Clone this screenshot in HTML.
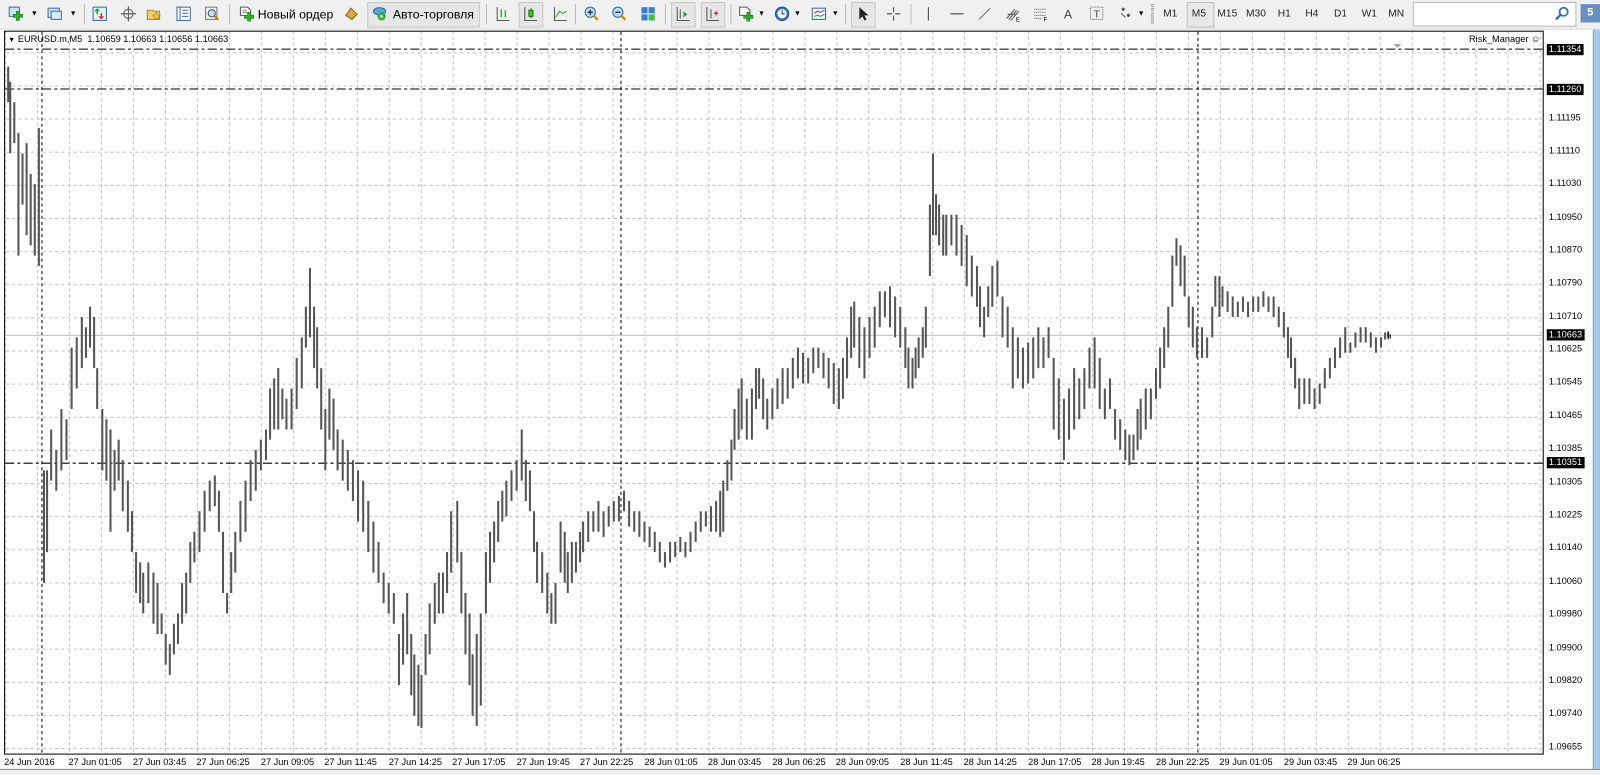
<!DOCTYPE html>
<html><head><meta charset="utf-8"><style>
html,body{margin:0;padding:0;width:1600px;height:774px;overflow:hidden;background:#f0f0f0;font-family:"Liberation Sans",sans-serif}
#w{position:absolute;left:0;top:0;width:1564px;height:757px;transform:scale(1.0230,1.0225);transform-origin:0 0}
.tb{position:absolute;left:0;top:0;width:1564px;height:28px;background:#f0f0f0;border-bottom:1px solid #d8d8d8}
.t{position:absolute;font-size:11px;color:#000;top:8px}
.sep{position:absolute;top:4px;width:1px;height:20px;background:#bbb}
.ic{position:absolute;top:6px;width:15px;height:15px}
.tf{position:absolute;top:8px;font-size:10px;color:#222}
.pl{position:absolute;left:1512px;font-size:9px;color:#000;height:11px;line-height:11px;padding:0 2px}
.bl{position:absolute;top:740px;font-size:9px;color:#000}
</style></head><body><div id="w">
<div class="tb">
 <svg class="ic" style="left:8px" viewBox="0 0 15 15"><rect x="1" y="1" width="10" height="9" fill="#cfe3f7" stroke="#3a6ea5"/><path d="M8 5h3v3h3v3h-3v3h-3v-3h-3v-3h3z" fill="#2fae2f" stroke="#1c7a1c" stroke-width=".6"/></svg>
 <div class="t" style="left:30px;font-size:7px;top:10px">▼</div>
 <svg class="ic" style="left:46px" viewBox="0 0 15 15"><rect x="1" y="2" width="11" height="9" fill="#cfe3f7" stroke="#3a6ea5"/><rect x="4" y="5" width="10" height="8" fill="#dce9f7" stroke="#3a6ea5"/></svg>
 <div class="t" style="left:68px;font-size:7px;top:10px">▼</div>
 <div class="sep" style="left:82px"></div>
 <svg class="ic" style="left:90px" viewBox="0 0 15 15"><rect x="1" y="1" width="13" height="13" fill="#e8f1fb" stroke="#3a6ea5"/><path d="M5 3v5M3 5l2-2 2 2" stroke="#2a2" fill="none" stroke-width="1.5"/><path d="M9 7v5M7 10l2 2 2-2" stroke="#d33" fill="none" stroke-width="1.5"/></svg>
 <svg class="ic" style="left:118px" viewBox="0 0 15 15"><circle cx="7.5" cy="7.5" r="4.5" fill="none" stroke="#555"/><path d="M7.5 0v15M0 7.5h15" stroke="#555"/></svg>
 <svg class="ic" style="left:143px" viewBox="0 0 15 15"><path d="M1 4h5l1 1h6v8H1z" fill="#f2cf6a" stroke="#b08a2a"/><path d="M10 6l1.2 2.5 2.6.3-2 1.8.6 2.6-2.4-1.4-2.4 1.4.6-2.6-2-1.8 2.6-.3z" fill="#f5c430" stroke="#a07a10" stroke-width=".5"/></svg>
 <svg class="ic" style="left:172px" viewBox="0 0 15 15"><rect x="1" y="1" width="13" height="13" fill="#fff" stroke="#3a6ea5"/><path d="M4 1v13M6 4h6M6 7h6M6 10h6" stroke="#3a6ea5"/></svg>
 <svg class="ic" style="left:200px" viewBox="0 0 15 15"><rect x="1" y="1" width="11" height="12" fill="#eef" stroke="#777"/><circle cx="7" cy="7" r="3.5" fill="#cde" stroke="#456"/><path d="M9.5 9.5l4 4" stroke="#b80" stroke-width="2"/></svg>
 <div class="sep" style="left:224px"></div>
 <svg class="ic" style="left:234px" viewBox="0 0 15 15"><path d="M1 1h7l3 3v5H1z" fill="#fff" stroke="#555"/><path d="M3 4h4M3 6h5" stroke="#777"/><path d="M8 6h3v3h3v3h-3v3h-3v-3h-3v-3h3z" fill="#2fae2f" stroke="#1c7a1c" stroke-width=".6"/></svg>
 <div class="t" style="left:252px;top:7px;font-size:12px">Новый ордер</div>
 <svg class="ic" style="left:336px" viewBox="0 0 15 15"><path d="M2 9l5-7 6 6-5 5z" fill="#d9a93a" stroke="#8a6318"/></svg>
 <div style="position:absolute;left:359px;top:2px;width:108px;height:23px;background:#e6e6e6;border:1px solid #c8c8c8"></div>
 <svg class="ic" style="left:364px" viewBox="0 0 15 15"><ellipse cx="7" cy="5" rx="6" ry="3.5" fill="#5aa2d8" stroke="#2c6c9e"/><circle cx="9" cy="10" r="4" fill="#2fae2f"/><path d="M8 8v4l3-2z" fill="#fff"/></svg>
 <div class="t" style="left:384px;top:7px;font-size:12px">Авто-торговля</div>
 <div class="sep" style="left:475px"></div>
 <svg class="ic" style="left:484px" viewBox="0 0 15 15"><path d="M2 1v13h12" stroke="#555" fill="none"/><path d="M6 3v8M10 4v7" stroke="#2a2" stroke-width="1.4"/></svg>
 <div style="position:absolute;left:507px;top:2px;width:22px;height:23px;background:#e6e6e6;border:1px solid #c8c8c8"></div>
 <svg class="ic" style="left:511px" viewBox="0 0 15 15"><path d="M2 1v13h12" stroke="#555" fill="none"/><rect x="6" y="4" width="4" height="6" fill="#3c3" stroke="#171"/><path d="M8 2v2M8 10v2" stroke="#171"/></svg>
 <svg class="ic" style="left:540px" viewBox="0 0 15 15"><path d="M2 1v13h12" stroke="#555" fill="none"/><path d="M3 11l4-6 3 2 4-2" stroke="#2a2" fill="none"/></svg>
 <div class="sep" style="left:562px"></div>
 <svg class="ic" style="left:571px" viewBox="0 0 15 15"><circle cx="6" cy="6" r="5" fill="#bde" stroke="#369"/><path d="M3.5 6h5M6 3.5v5" stroke="#236" stroke-width="1.5"/><path d="M9.5 9.5l4 4" stroke="#c90" stroke-width="2.4"/></svg>
 <svg class="ic" style="left:598px" viewBox="0 0 15 15"><circle cx="6" cy="6" r="5" fill="#bde" stroke="#369"/><path d="M3.5 6h5" stroke="#236" stroke-width="1.5"/><path d="M9.5 9.5l4 4" stroke="#c90" stroke-width="2.4"/></svg>
 <svg class="ic" style="left:626px" viewBox="0 0 15 15"><rect x="1" y="1" width="6" height="6" fill="#3a7ed0"/><rect x="8" y="1" width="6" height="6" fill="#3a7ed0"/><rect x="1" y="8" width="6" height="6" fill="#3a7ed0"/><rect x="8" y="8" width="6" height="6" fill="#4b4"/></svg>
 <div class="sep" style="left:650px"></div>
 <div style="position:absolute;left:656px;top:2px;width:22px;height:23px;background:#e6e6e6;border:1px solid #c8c8c8"></div>
 <svg class="ic" style="left:660px" viewBox="0 0 15 15"><path d="M2 1v13h12M5 3v9" stroke="#555" fill="none"/><path d="M8 5l4 3-4 3z" fill="#2a2"/></svg>
 <div style="position:absolute;left:685px;top:2px;width:22px;height:23px;background:#e6e6e6;border:1px solid #c8c8c8"></div>
 <svg class="ic" style="left:689px" viewBox="0 0 15 15"><path d="M2 1v13h12M6 3v9" stroke="#555" fill="none"/><path d="M9 7h4M11 5v4" stroke="#c22" stroke-width="1.2"/></svg>
 <div class="sep" style="left:714px"></div>
 <svg class="ic" style="left:722px" viewBox="0 0 15 15"><path d="M1 1h7l3 3v5H1z" fill="#fff" stroke="#555"/><path d="M8 6h3v3h3v3h-3v3h-3v-3h-3v-3h3z" fill="#2fae2f" stroke="#1c7a1c" stroke-width=".6"/></svg>
 <div class="t" style="left:741px;font-size:7px;top:10px">▼</div>
 <svg class="ic" style="left:757px" viewBox="0 0 15 15"><circle cx="7.5" cy="7.5" r="6.5" fill="#2f7fd0" stroke="#164c86"/><circle cx="7.5" cy="7.5" r="4.5" fill="#fff"/><path d="M7.5 4v3.5h2.5" stroke="#333" fill="none"/></svg>
 <div class="t" style="left:776px;font-size:7px;top:10px">▼</div>
 <svg class="ic" style="left:793px" viewBox="0 0 15 15"><rect x="1" y="2" width="13" height="11" fill="#eef4fb" stroke="#3a6ea5"/><path d="M3 7l3-2 3 1 4-2" stroke="#c33" fill="none"/><path d="M3 10l3-1 3 1 4-2" stroke="#2a2" fill="none"/></svg>
 <div class="t" style="left:813px;font-size:7px;top:10px">▼</div>
 <div class="sep" style="left:826px"></div>
 <div style="position:absolute;left:832px;top:2px;width:22px;height:23px;background:#e6e6e6;border:1px solid #c8c8c8"></div>
 <svg class="ic" style="left:836px" viewBox="0 0 15 15"><path d="M4 1v12l3-3 2 4 2-1-2-4h4z" fill="#222"/></svg>
 <svg class="ic" style="left:866px" viewBox="0 0 15 15"><path d="M7.5 1v5M7.5 9v5M1 7.5h5M9 7.5h5" stroke="#444"/></svg>
 <div class="sep" style="left:890px"></div>
 <svg class="ic" style="left:900px" viewBox="0 0 15 15"><path d="M7.5 1v13" stroke="#444"/></svg>
 <svg class="ic" style="left:928px" viewBox="0 0 15 15"><path d="M1 7.5h13" stroke="#444"/></svg>
 <svg class="ic" style="left:955px" viewBox="0 0 15 15"><path d="M2 13L13 2" stroke="#666"/></svg>
 <svg class="ic" style="left:983px" viewBox="0 0 15 15"><path d="M1 12L9 3M3 13L11 4M5 14L13 5M2 8h9" stroke="#555"/><text x="10" y="15" font-size="6" font-family="Liberation Sans">E</text></svg>
 <svg class="ic" style="left:1010px" viewBox="0 0 15 15"><path d="M1 3h12M1 6h12M1 9h12M1 12h8" stroke="#555" stroke-dasharray="1 1"/><text x="10" y="15" font-size="6" font-family="Liberation Sans">F</text></svg>
 <div class="t" style="left:1040px;top:7px;font-size:12px;color:#444">A</div>
 <svg class="ic" style="left:1065px" viewBox="0 0 15 15"><rect x="1" y="1" width="12" height="12" fill="none" stroke="#666" stroke-dasharray="1 1"/><text x="4" y="11" font-size="10" font-family="Liberation Sans" fill="#444">T</text></svg>
 <svg class="ic" style="left:1093px" viewBox="0 0 15 15"><path d="M3 3l2-2 2 2-2 2zM8 9l2-2 2 2-2 2z" fill="#555"/><path d="M3 7l4 4" stroke="#555"/></svg>
 <div class="t" style="left:1112px;font-size:7px;top:10px">▼</div>
 <div class="sep" style="left:1125px;background:repeating-linear-gradient(#999 0 1px,transparent 1px 2px);width:3px"></div>
 <div class="tf" style="left:1137px">M1</div>
 <div style="position:absolute;left:1160px;top:2px;width:25px;height:23px;background:#e8e8e8;border:1px solid #c0c0c0"></div>
 <div class="tf" style="left:1165px">M5</div>
 <div class="tf" style="left:1190px">M15</div>
 <div class="tf" style="left:1218px">M30</div>
 <div class="tf" style="left:1249px">H1</div>
 <div class="tf" style="left:1276px">H4</div>
 <div class="tf" style="left:1304px">D1</div>
 <div class="tf" style="left:1331px">W1</div>
 <div class="tf" style="left:1357px">MN</div>
 <div style="position:absolute;left:1381px;top:2px;width:158px;height:22px;background:#fff;border:1px solid #b8b8b8"></div>
 <svg style="position:absolute;left:1520px;top:6px;width:14px;height:14px" viewBox="0 0 14 14"><circle cx="8.5" cy="5.5" r="4" fill="none" stroke="#2a6cc0" stroke-width="1.6"/><path d="M5.5 8.5L1 13" stroke="#2a6cc0" stroke-width="2.2"/></svg>
 <div style="position:absolute;left:1545px;top:4px;width:19px;height:18px;background:#6a8fbf;color:#fff;font-size:11px;font-weight:bold;text-align:center;line-height:17px">5</div>
</div>

<div style="position:absolute;left:0;top:29px;width:1564px;height:728px;background:#fff"></div>
<svg style="position:absolute;left:0;top:0" width="1564" height="757" viewBox="0 0 1564 757">
<defs>
<pattern id="gv" x="5" y="0" width="31.25" height="757" patternUnits="userSpaceOnUse"><path d="M0.5 0V757" stroke="#c0c0c0" stroke-dasharray="3 3"/></pattern>
<pattern id="gh" x="0" y="18.8" width="1564" height="32.4" patternUnits="userSpaceOnUse"><path d="M0 0.5H1564" stroke="#c0c0c0" stroke-dasharray="3 3"/></pattern>
</defs>
<rect x="5" y="31" width="1502" height="705" fill="url(#gv)"/>
<rect x="5" y="31" width="1502" height="705" fill="url(#gh)"/>
<rect x="4.5" y="30.5" width="1504" height="707" fill="none" stroke="#000"/>
<path d="M41 31V736M607 31V736M1171 31V736" stroke="#000" stroke-dasharray="3 3"/>
<path d="M5 48H1508M5 87H1508M5 453H1508" stroke="#000" stroke-dasharray="9 3 3 3"/>
<path d="M5 328H1508" stroke="#c0c0c0"/>
<path d="M1362 43l4 4 4-4z" fill="#aaa"/>
<g stroke="#555" fill="none">
<path stroke-width="2" d="M8 65V100M10 80V150M14 100V140M18 130V250M22 150V200M26 140V230M30 170V240M34 180V250M38 125V260M43 460V570M46 460V540M50 420V470M55 440V480M60 400V460M65 410V450M70 340V400M75 330V380M80 310V360M84 320V350M88 300V340M92 310V360M95 360V400M100 400V460M104 410V470M108 420V520M112 440V480M116 430V470M120 450V500M125 470V520M129 500V540M133 540V580M137 550V590M140 560V600M145 550V590M150 560V610M154 570V620M158 600V620M162 620V650M166 630V660M170 610V640M174 600V630M178 570V610M182 560V600M186 530V570M190 520V550M195 500V540M200 480V520M205 470V500M210 465V495M214 480V520M218 520V580M222 580V600M226 540V580M230 520V560M235 490V530M240 470V520M245 450V490M250 440V480M255 430V460M260 420V450M264 380V430M268 370V420M272 360V420M276 380V410M280 390V420M285 380V420M290 350V400M295 330V380M299 300V340M303 262V330M307 300V360M310 320V380M314 360V420M318 400V460M322 380V430M326 390V440M330 420V460M335 430V470M340 440V480M345 450V490M350 460V510M355 470V520M360 490V540M365 510V560M370 530V570M375 560V590M380 570V600M385 580V610M390 620V670M394 600V650M398 580V640M402 620V680M405 640V700M409 650V710M412 660V712M416 620V660M420 590V640M425 570V610M429 560V600M433 560V600M437 540V580M441 500V560M447 490V550M451 540V600M455 580V640M459 600V670M462 640V700M466 620V710M470 600V690M475 540V600M479 520V570M483 510V550M487 490V530M491 480V510M495 470V505M500 460V490M505 450V480M510 420V470M514 450V490M518 460V500M522 500V540M525 530V570M530 540V580M535 560V600M539 580V610M543 570V610M548 510V560M552 520V570M555 540V580M559 530V570M563 530V560M567 520V550M570 510V540M575 500V530M580 500V520M585 490V520M590 500V525M595 495V515M600 490V510M605 485V510M610 480V500M615 490V515M620 500V520M625 500V525M630 510V530M635 515V535M640 520V540M645 530V550M650 540V555M655 530V550M660 530V545M665 525V540M670 530V545M675 520V540M680 510V530M685 500V520M690 500V515M695 495V520M700 490V520M704 480V525M707 470V520M711 450V480M715 430V470M718 400V440M722 380V430M725 370V420M730 390V430M735 380V430M739 360V400M742 360V390M746 370V410M750 390V420M755 380V410M760 370V400M765 360V395M770 360V390M775 350V380M780 340V370M785 345V375M790 350V375M795 340V365M800 340V360M805 345V370M810 350V380M815 355V395M820 360V400M824 350V390M828 330V370M832 300V350M835 295V340M840 310V360M845 320V370M850 310V350M855 300V340M860 285V320M865 285V310M870 280V320M875 290V330M880 300V340M885 320V360M888 340V380M892 350V380M895 340V370M898 330V360M902 320V350M905 300V340M909 200V270M912 150V230M915 190V230M918 200V240M922 210V250M925 210V250M930 210V240M935 210V250M940 220V260M945 230V280M950 250V290M955 260V300M958 280V320M962 300V330M966 280V310M970 260V300M975 255V290M980 290V330M985 300V340M990 320V380M995 330V370M1000 340V380M1005 335V375M1010 330V370M1015 320V360M1020 330V360M1025 320V350M1030 350V420M1035 370V430M1040 390V450M1045 380V430M1050 360V420M1055 370V410M1060 360V400M1065 340V380M1070 330V380M1075 350V400M1080 380V410M1085 370V400M1090 400V430M1095 410V440M1100 420V450M1104 425V455M1108 425V450M1112 400V440M1115 390V430M1120 380V420M1125 380V410M1130 360V390M1134 340V380M1138 320V360M1142 300V340M1146 250V300M1150 233V260M1154 240V280M1158 250V290M1162 290V320M1166 300V340M1170 320V350M1175 320V350M1180 330V350M1185 300V330M1188 270V300M1192 270V310M1195 280V300M1200 285V305M1205 290V310M1210 295V310M1215 290V305M1220 295V310M1225 290V305M1230 290V305M1235 285V300M1240 290V305M1245 290V310M1250 300V320M1255 305V330M1259 320V350M1262 330V360M1266 350V380M1270 370V400M1275 370V395M1280 370V395M1285 380V400M1290 375V395M1295 360V380M1300 350V370M1305 340V360M1310 330V350M1315 320V345M1320 335V345M1325 325V340M1330 320V335M1335 320V335M1340 325V340M1345 330V345M1350 330V340M1354 325V332M1357 325V330"/>
</g>
<path d="M1357 324V332M1359 327V331" stroke="#000"/>
</svg>

<div style="position:absolute;left:8px;top:33px;font-size:9px;color:#000;white-space:pre"><span style="font-size:7px">▼</span> EURUSD.m,M5  1.10659 1.10663 1.10656 1.10663</div>
<div style="position:absolute;left:1436px;top:33px;font-size:9px;color:#000">Risk_Manager ☺</div>

<div class="pl" style="top:43px;background:#000;color:#fff">1.11354</div>
<div class="pl" style="top:82px;background:#000;color:#fff">1.11260</div>
<div class="pl" style="top:110px">1.11195</div>
<div class="pl" style="top:142px">1.11110</div>
<div class="pl" style="top:174px">1.11030</div>
<div class="pl" style="top:207px">1.10950</div>
<div class="pl" style="top:239px">1.10870</div>
<div class="pl" style="top:271px">1.10790</div>
<div class="pl" style="top:304px">1.10710</div>
<div class="pl" style="top:322px;background:#000;color:#fff">1.10663</div>
<div class="pl" style="top:336px">1.10625</div>
<div class="pl" style="top:368px">1.10545</div>
<div class="pl" style="top:401px">1.10465</div>
<div class="pl" style="top:433px">1.10385</div>
<div class="pl" style="top:447px;background:#000;color:#fff">1.10351</div>
<div class="pl" style="top:466px">1.10305</div>
<div class="pl" style="top:498px">1.10225</div>
<div class="pl" style="top:530px">1.10140</div>
<div class="pl" style="top:563px">1.10060</div>
<div class="pl" style="top:595px">1.09980</div>
<div class="pl" style="top:628px">1.09900</div>
<div class="pl" style="top:660px">1.09820</div>
<div class="pl" style="top:692px">1.09740</div>
<div class="pl" style="top:725px">1.09655</div>
<div style="position:absolute;left:1557px;top:29px;width:7px;height:728px;background:#a9c8e8;border-left:1px solid #7fa4cc"></div>

<div class="bl" style="left:4px">24 Jun 2016</div>
<div class="bl" style="left:67px">27 Jun 01:05</div>
<div class="bl" style="left:130px">27 Jun 03:45</div>
<div class="bl" style="left:192px">27 Jun 06:25</div>
<div class="bl" style="left:255px">27 Jun 09:05</div>
<div class="bl" style="left:317px">27 Jun 11:45</div>
<div class="bl" style="left:380px">27 Jun 14:25</div>
<div class="bl" style="left:442px">27 Jun 17:05</div>
<div class="bl" style="left:505px">27 Jun 19:45</div>
<div class="bl" style="left:567px">27 Jun 22:25</div>
<div class="bl" style="left:630px">28 Jun 01:05</div>
<div class="bl" style="left:692px">28 Jun 03:45</div>
<div class="bl" style="left:755px">28 Jun 06:25</div>
<div class="bl" style="left:817px">28 Jun 09:05</div>
<div class="bl" style="left:880px">28 Jun 11:45</div>
<div class="bl" style="left:942px">28 Jun 14:25</div>
<div class="bl" style="left:1005px">28 Jun 17:05</div>
<div class="bl" style="left:1067px">28 Jun 19:45</div>
<div class="bl" style="left:1130px">28 Jun 22:25</div>
<div class="bl" style="left:1192px">29 Jun 01:05</div>
<div class="bl" style="left:1255px">29 Jun 03:45</div>
<div class="bl" style="left:1317px">29 Jun 06:25</div>
<div style="position:absolute;left:0;top:752px;width:1564px;height:5px;background:#f0f0f0;border-top:1px solid #888"></div>
</div></body></html>
